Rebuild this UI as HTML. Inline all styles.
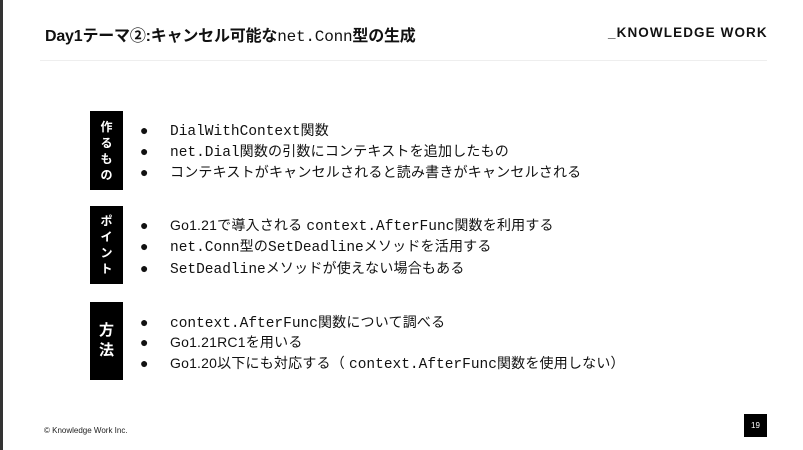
<!DOCTYPE html>
<html><head><meta charset="utf-8"><style>
body{margin:0;width:803px;height:450px;background:#fff;position:relative;overflow:hidden;font-family:"Liberation Sans","Noto Sans CJK JP",sans-serif;color:#111}
.strip{position:absolute;left:0;top:0;width:3px;height:450px;background:#333}
.title{position:absolute;left:45px;top:22px;font-size:16px;font-weight:bold;white-space:nowrap;letter-spacing:-0.2px}
.mono{font-family:"Liberation Mono","Noto Sans CJK JP",monospace;font-weight:normal}
.logo{position:absolute;left:608px;top:25px;font-size:13.5px;font-weight:bold;letter-spacing:1.1px}
.hr{position:absolute;left:40px;top:60px;width:727px;height:1px;background:#eee}
.box{position:absolute;left:90px;width:33px;background:#000;color:#fff;font-weight:bold;display:flex;flex-direction:column;align-items:center;justify-content:center;font-size:12px;line-height:16px}
.ln{position:absolute;left:140px;font-size:14px;white-space:nowrap;letter-spacing:0.2px}
.ln b{display:inline-block;width:30px;font-weight:normal;letter-spacing:0}
.ln .m{font-family:"Liberation Mono","Noto Sans CJK JP",monospace;font-size:14.5px;letter-spacing:0}
.foot{position:absolute;left:44px;top:426px;font-size:8px;color:#222}
.pg{position:absolute;left:744px;top:414px;width:23px;height:23px;background:#000;color:#fff;font-size:8px;text-align:center;line-height:23px}
</style></head><body>
<div class="strip"></div>
<div class="title">Day1テーマ②:キャンセル可能な<span class="mono">net.Conn</span>型の生成</div>
<div class="logo">_KNOWLEDGE WORK</div>
<div class="hr"></div>
<div class="box" style="top:111px;height:79px">作<br>る<br>も<br>の</div>
<div class="box" style="top:206px;height:78px">ポ<br>イ<br>ン<br>ト</div>
<div class="box" style="top:302px;height:78px;font-size:15px;line-height:20px">方<br>法</div>
<div class="ln" style="top:120px"><b>●</b><span class="m">DialWithContext</span>関数</div>
<div class="ln" style="top:141px"><b>●</b><span class="m">net.Dial</span>関数の引数にコンテキストを追加したもの</div>
<div class="ln" style="top:162px"><b>●</b>コンテキストがキャンセルされると読み書きがキャンセルされる</div>
<div class="ln" style="top:215px"><b>●</b>Go1.21で導入される <span class="m">context.AfterFunc</span>関数を利用する</div>
<div class="ln" style="top:236px"><b>●</b><span class="m">net.Conn</span>型の<span class="m">SetDeadline</span>メソッドを活用する</div>
<div class="ln" style="top:258px"><b>●</b><span class="m">SetDeadline</span>メソッドが使えない場合もある</div>
<div class="ln" style="top:312px"><b>●</b><span class="m">context.AfterFunc</span>関数について調べる</div>
<div class="ln" style="top:332px"><b>●</b>Go1.21RC1を用いる</div>
<div class="ln" style="top:353px"><b>●</b>Go1.20以下にも対応する（ <span class="m">context.AfterFunc</span>関数を使用しない）</div>
<div class="foot">© Knowledge Work Inc.</div>
<div class="pg">19</div>
</body></html>
